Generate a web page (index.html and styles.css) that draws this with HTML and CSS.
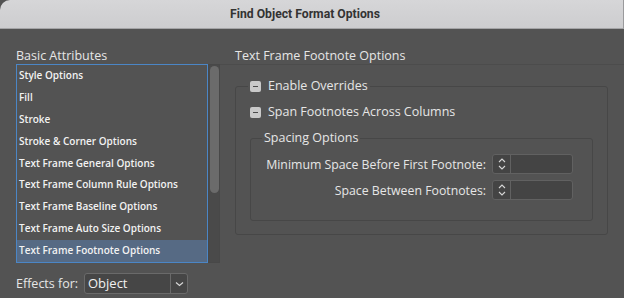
FILE: index.html
```html
<!DOCTYPE html>
<html>
<head>
<meta charset="utf-8">
<link rel="stylesheet" href="styles.css">
</head>
<body>
<div class="window">
  <div class="titlebar">Find Object Format Options</div>
  <div class="content">
    <div class="left">
      <div class="heading">Basic Attributes</div>
      <div class="listwrap">
        <ul class="list">
          <li>Style Options</li>
          <li>Fill</li>
          <li>Stroke</li>
          <li>Stroke &amp; Corner Options</li>
          <li>Text Frame General Options</li>
          <li>Text Frame Column Rule Options</li>
          <li>Text Frame Baseline Options</li>
          <li>Text Frame Auto Size Options</li>
          <li class="selected">Text Frame Footnote Options</li>
        </ul>
        <div class="scrollbar"><div class="thumb"></div></div>
      </div>
      <div class="effects">
        <span class="effects-label">Effects for:</span>
        <div class="select">
          <span class="select-value">Object</span>
          <span class="select-btn">
            <svg width="9" height="6" viewBox="0 0 9 6"><path d="M1 1.5 L4.5 4.5 L8 1.5" fill="none" stroke="#d8d8d8" stroke-width="1.2"/></svg>
          </span>
        </div>
      </div>
    </div>
    <div class="right">
      <div class="panel-title">Text Frame Footnote Options</div>
      <fieldset class="group outer">
        <legend class="check-legend"><span class="checkbox"></span>Enable Overrides</legend>
        <div class="check-row"><span class="checkbox"></span>Span Footnotes Across Columns</div>
        <fieldset class="group inner">
          <legend class="text-legend">Spacing Options</legend>
          <div class="field-row first">
            <span class="field-label">Minimum Space Before First Footnote:</span>
            <span class="stepper">
              <span class="arrows">
                <svg width="10" height="16" viewBox="0 0 10 16"><path d="M2 6 L5 3 L8 6" fill="none" stroke="#d6d6d6" stroke-width="1.1"/><path d="M2 10 L5 13 L8 10" fill="none" stroke="#d6d6d6" stroke-width="1.1"/></svg>
              </span>
              <span class="input"></span>
            </span>
          </div>
          <div class="field-row">
            <span class="field-label">Space Between Footnotes:</span>
            <span class="stepper">
              <span class="arrows">
                <svg width="10" height="16" viewBox="0 0 10 16"><path d="M2 6 L5 3 L8 6" fill="none" stroke="#d6d6d6" stroke-width="1.1"/><path d="M2 10 L5 13 L8 10" fill="none" stroke="#d6d6d6" stroke-width="1.1"/></svg>
              </span>
              <span class="input"></span>
            </span>
          </div>
        </fieldset>
      </fieldset>
    </div>
  </div>
</div>
</body>
</html>
```

FILE: styles.css
```css
* { box-sizing: border-box; }
html, body {
  margin: 0;
  padding: 0;
  background: #535353;
  width: 624px;
  height: 298px;
  overflow: hidden;
  font-family: "Open Sans", "DejaVu Sans", sans-serif;
  color: #e6e6e6;
}
.window {
  width: 624px;
  height: 298px;
}
.titlebar {
  height: 29px;
  background: linear-gradient(#d6d6d8, #cdcdcf);
  border-top-left-radius: 10px;
  border-bottom: 1px solid #a4a4a6;
  border-right: 1px solid #9a9a9c;
  color: #333;
  font-family: Roboto, "Liberation Sans", sans-serif;
  font-weight: 700;
  font-size: 12.2px;
  line-height: 28px;
  text-align: center;
  padding-right: 13px;
}
.content {
  display: flex;
}
.left {
  width: 220px;
  padding-left: 16px;
}
.heading {
  font-size: 12.5px;
  line-height: 16px;
  margin-top: 19px;
  height: 16px;
}
.listwrap {
  display: flex;
  height: 199px;
}
.list {
  list-style: none;
  margin: 0;
  padding: 0;
  width: 192px;
  border: 1px solid #4b86c6;
  font-size: 10px;
  font-weight: 600;
  color: #f2f2f2;
}
.list li {
  height: 21.9px;
  line-height: 21.9px;
  padding-left: 2px;
  white-space: nowrap;
}
.list li.selected {
  background: #566a84;
}
.scrollbar {
  width: 12px;
  background: #4a4a4a;
  border: 1px solid #484848;
  padding: 1px 1px;
}
.thumb {
  width: 9px;
  height: 127px;
  background: #6b6b6b;
  border-radius: 5px;
}
.effects {
  display: flex;
  align-items: center;
  margin-top: 10px;
  height: 21px;
}
.effects-label {
  font-size: 12.5px;
  width: 68px;
}
.select {
  display: flex;
  width: 104px;
  height: 21px;
  border: 1px solid #6a6a6a;
  border-radius: 3px;
  background: #464646;
}
.select-value {
  flex: 1;
  font-size: 13px;
  line-height: 19px;
  padding-left: 3px;
  color: #f0f0f0;
}
.select-btn {
  width: 17px;
  border-left: 1px solid #6a6a6a;
  display: flex;
  align-items: center;
  justify-content: center;
}
.right {
  flex: 1;
}
.panel-title {
  font-size: 12.5px;
  line-height: 16px;
  padding-left: 15px;
  margin-top: 19px;
  height: 17px;
  border-bottom: 1px solid #4c4c4c;
}
.group {
  margin: 0;
  border: 1px solid #474747;
  border-radius: 3px;
  min-width: 0;
}
.outer {
  margin-top: 13px;
  margin-left: 15px;
  width: 373px;
  height: 157px;
  padding: 0 12px 0 12px;
}
.check-legend, .text-legend {
  padding: 0 2px;
  font-size: 12.5px;
  line-height: 16px;
  display: flex;
  align-items: center;
}
.checkbox {
  width: 11px;
  height: 11px;
  border-radius: 2px;
  background: #c9c9c9;
  margin-right: 7px;
  position: relative;
  flex: none;
}
.checkbox::after {
  content: "";
  position: absolute;
  left: 3px;
  top: 5px;
  width: 5px;
  height: 1.5px;
  background: #4a4a4a;
}
.check-row {
  display: flex;
  align-items: center;
  font-size: 12.5px;
  line-height: 16px;
  margin-top: 10px;
  padding-left: 2px;
}
.inner {
  margin-top: 10px;
  margin-left: 2px;
  width: 343px;
  height: 91px;
  padding: 0 11px;
}
.field-row {
  display: flex;
  align-items: center;
  justify-content: flex-end;
  height: 20px;
  margin-right: 8px;
  margin-bottom: 6px;
  white-space: nowrap;
}
.field-row.first {
  margin-top: 8px;
}
.field-label {
  font-size: 12.3px;
  margin-right: 6px;
}
.stepper {
  display: flex;
  width: 81px;
  height: 20px;
  border: 1px solid #616161;
  border-radius: 3px;
  background: #444;
}
.arrows {
  width: 18px;
  border-right: 1px solid #616161;
  display: flex;
  align-items: center;
  justify-content: center;
}
.input {
  flex: 1;
}
```
